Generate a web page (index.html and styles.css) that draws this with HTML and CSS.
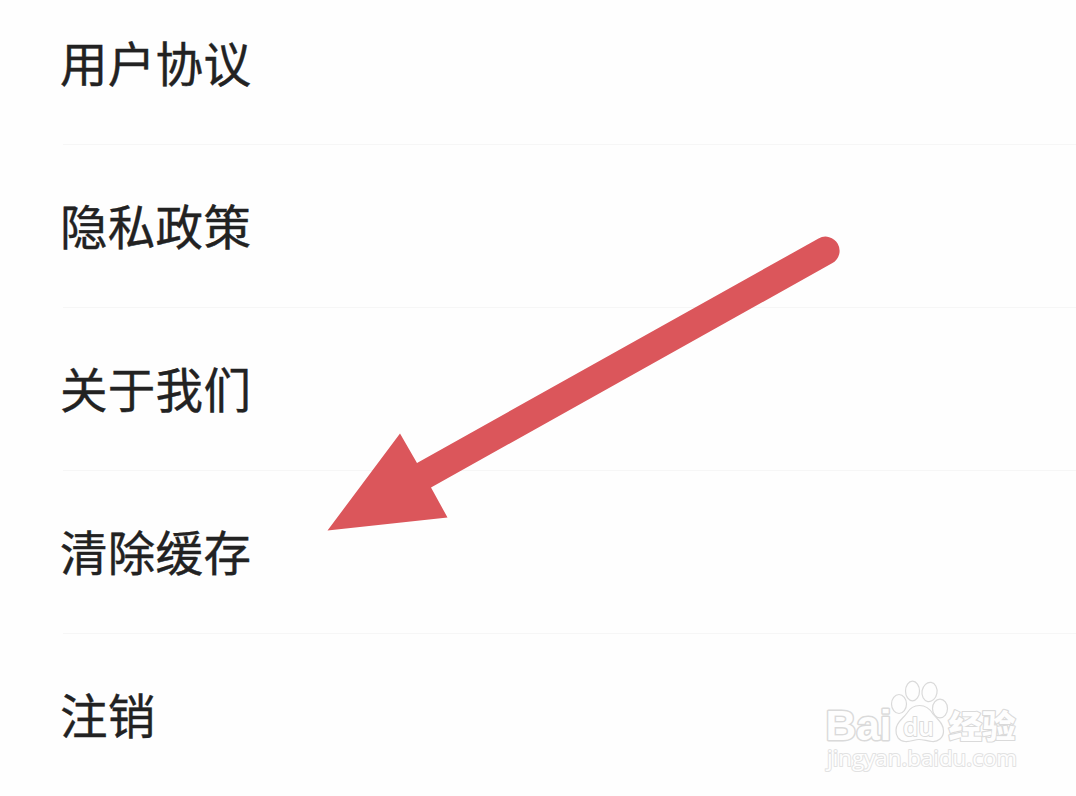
FILE: index.html
```
<!DOCTYPE html>
<html lang="zh-CN">
<head>
<meta charset="utf-8">
<title>设置</title>
<link rel="stylesheet" href="styles.css">
</head>
<body>
<main class="screen">
  <ul class="settings">
    <li class="row">用户协议</li>
    <li class="row">隐私政策</li>
    <li class="row">关于我们</li>
    <li class="row">清除缓存</li>
    <li class="row">注销</li>
  </ul>
  <svg class="arrow" width="1076" height="796" viewBox="0 0 1076 796" aria-hidden="true">
    <path d="M327.500 530.500 400 433.500 417 463 818.500 238.500A14 14 0 0 1 832.500 263L431 487.500 447.500 517.500Z"/>
  </svg>
  <svg class="watermark" width="230" height="115" viewBox="810 670 230 115">
    <g class="outline">
      <text class="brand" x="825.500" y="740" textLength="66" lengthAdjust="spacingAndGlyphs">Bai</text>
      <ellipse cx="899" cy="704" rx="7.500" ry="9.500"/>
      <ellipse cx="912.500" cy="691" rx="7" ry="9.800"/>
      <ellipse cx="929.500" cy="692" rx="7.500" ry="9.700" transform="rotate(10 929.500 692)"/>
      <ellipse cx="940" cy="708.500" rx="7.500" ry="9.300"/>
      <path d="M919.500 705.500C926 705.500 930 709 933 714C937 719 943.500 723 943.500 731C943.500 738 938 742 932 741.500C927 741 923 739.500 919 739.500C914 739.500 911 742 905 741.500C899 741 895.500 736 896 730C896 722 903 719 907 713C910 708 914 705.500 919.500 705.500Z"/>
      <text class="paw-text" x="903" y="735.500" textLength="31" lengthAdjust="spacingAndGlyphs">du</text>
      <text class="category" x="948.500" y="737.500" textLength="67" lengthAdjust="spacingAndGlyphs">经验</text>
      <text class="address" x="827" y="766" textLength="190" lengthAdjust="spacingAndGlyphs">jingyan.baidu.com</text>
    </g>
  </svg>
</main>
</body>
</html>
```
FILE: styles.css
```
body {
  margin: 0;
  background: #fefefe;
}

.screen {
  position: relative;
  width: 1076px;
  height: 796px;
  overflow: hidden;
  font-family: "Noto Sans CJK SC", sans-serif;
}

.settings {
  margin: -18px 0 0;
  padding: 0 0 0 63px;
  list-style: none;
}

.row {
  box-sizing: border-box;
  height: 163px;
  border-bottom: 1px solid #f6f6f6;
  color: #222;
  font-size: 47.5px;
  letter-spacing: 0.3px;
  line-height: 159px;
  text-indent: -3px;
  -webkit-text-stroke: 0.4px #222;
}

.row:last-child {
  border-bottom: 0;
}

.arrow {
  position: absolute;
  top: 0;
  left: 0;
  fill: #db565b;
}

.watermark {
  position: absolute;
  top: 670px;
  left: 810px;
}

.outline {
  fill: #fefefe;
  stroke: #dadada;
  stroke-width: 1.2px;
  stroke-linejoin: round;
}

.brand,
.paw-text,
.category,
.address {
  paint-order: stroke;
}

.brand {
  font: 700 42.5px "Liberation Sans", sans-serif;
  stroke-width: 3px;
}

.paw-text {
  font: 600 26px "Open Sans", sans-serif;
  stroke-width: 2px;
}

.category {
  font: 900 31.5px "Noto Sans CJK SC", sans-serif;
  stroke-width: 2.2px;
}

.address {
  font: 400 22.5px "Open Sans", sans-serif;
  stroke: #e2e2e2;
  stroke-width: 2px;
}
```
